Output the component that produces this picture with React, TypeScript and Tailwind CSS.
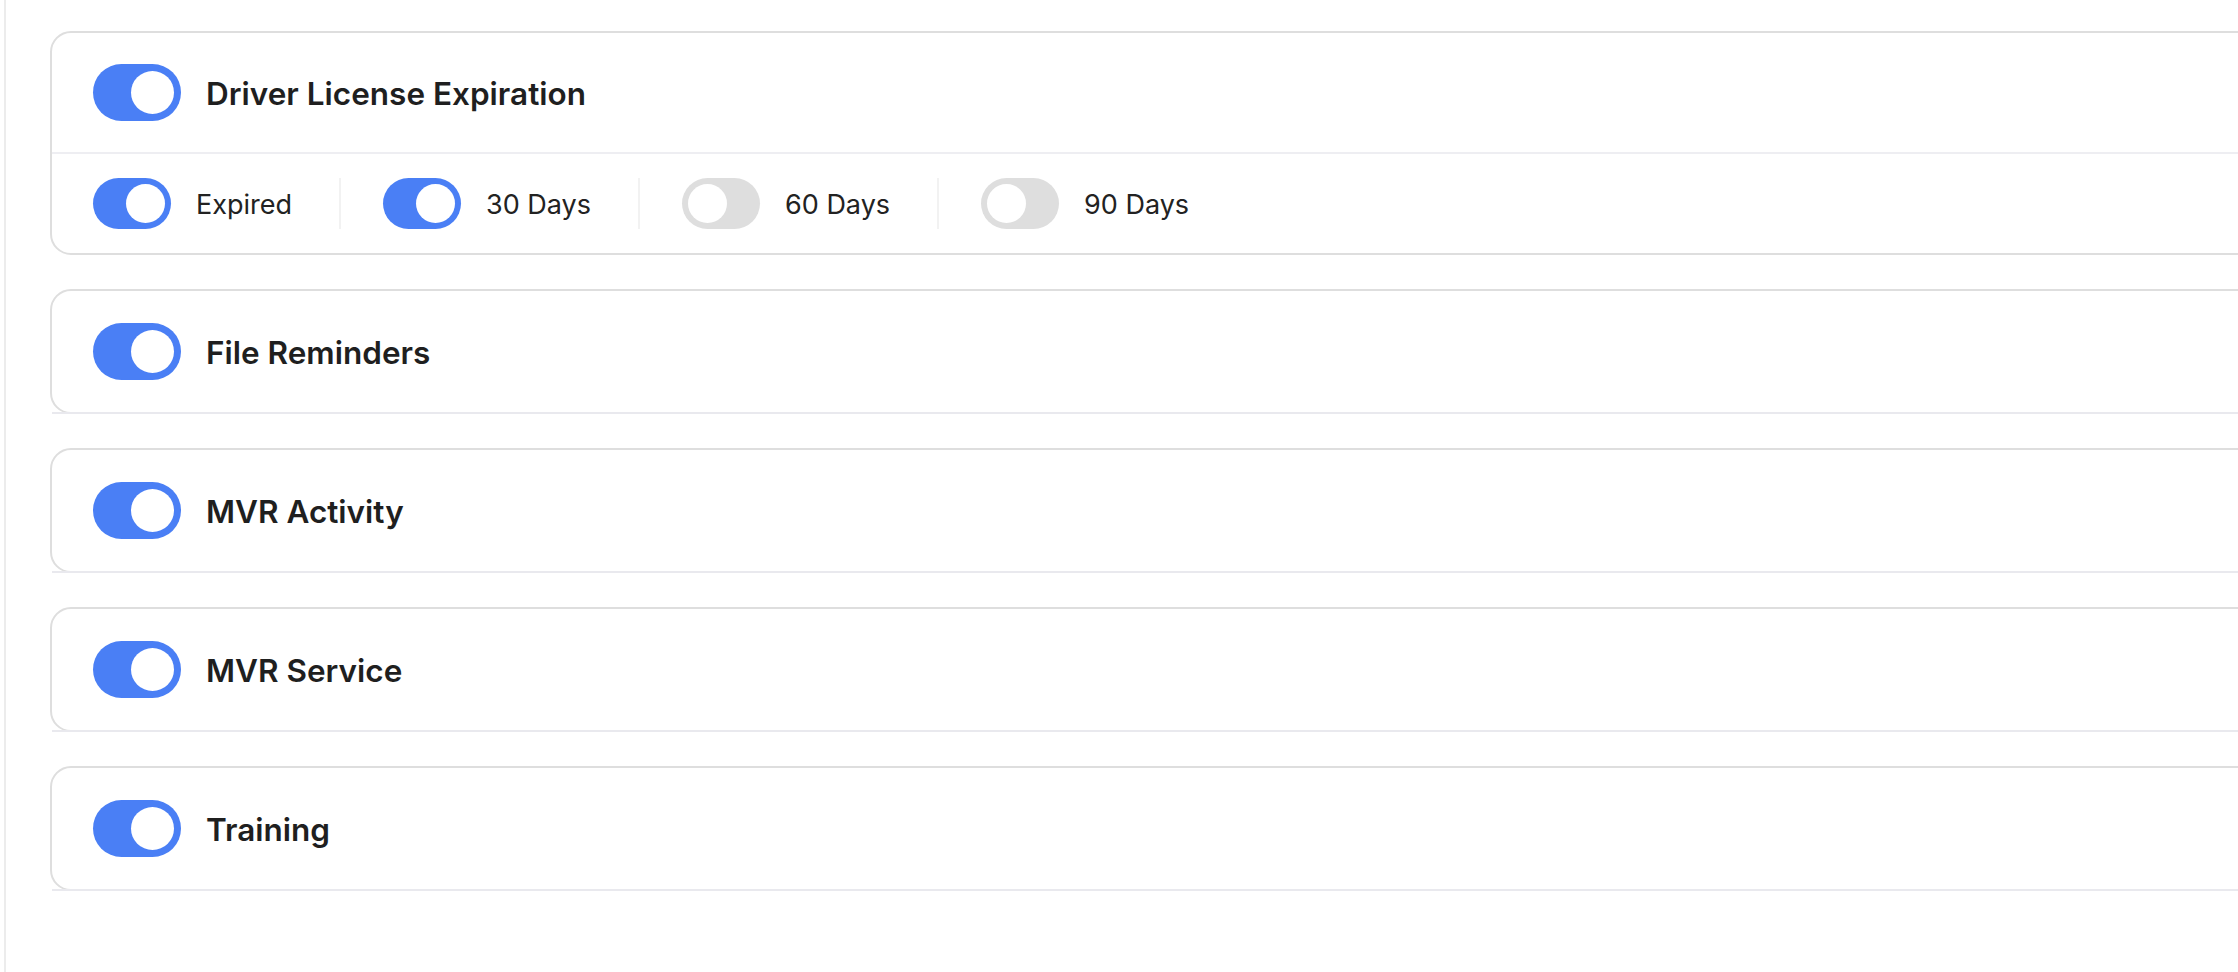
import React, { useState } from 'react';

type ToggleProps = {
  on: boolean;
  size?: 'lg' | 'sm';
  onChange?: () => void;
};

const Toggle: React.FC<ToggleProps> = ({ on, size = 'lg', onChange }) => {
  const lg = size === 'lg';
  return (
    <button
      type="button"
      onClick={onChange}
      className={`flex shrink-0 items-center rounded-full ${lg ? 'h-[57px] w-[88px] px-[7px]' : 'h-[51px] w-[78px] px-[6px]'} ${on ? 'justify-end bg-[#4a7ff5]' : 'justify-start bg-[#dedede]'}`}
    >
      <span className={`block rounded-full bg-white ${lg ? 'h-[43px] w-[43px]' : 'h-[39px] w-[39px]'}`} />
    </button>
  );
};

const windows = [
  { label: 'Expired', on: true },
  { label: '30 Days', on: true },
  { label: '60 Days', on: false },
  { label: '90 Days', on: false },
];

const sections = ['File Reminders', 'MVR Activity', 'MVR Service', 'Training'];

export default function App() {
  const [expiry, setExpiry] = useState(windows.map((w) => w.on));

  return (
    <div className="h-[972px] w-[2238px] overflow-hidden bg-white pl-[4px]" style={{ fontFamily: 'Inter, "Noto Sans", sans-serif' }}>
      <div className="h-full border-l-2 border-[#ececec] pl-[44px] pt-[31px]">
        <div className="flex w-[2400px] flex-col gap-[34px]">
          {/* Driver license card, expanded */}
          <section className="rounded-[21px] border-2 border-[#dedede] bg-white">
            <div className="flex h-[121px] items-center gap-[25px] border-b-2 border-[#eeeef2] px-[41px]">
              <Toggle on />
              <h3 className="pt-[3px] text-[31.5px] font-semibold text-[#1f1f1f]">Driver License Expiration</h3>
            </div>
            <div className="flex h-[99px] items-center px-[41px]">
              {windows.map((w, i) => (
                <div
                  key={w.label}
                  className={`flex items-center gap-[25px] pr-[47px] ${i > 0 ? 'border-l-2 border-[#f2f2f2] pl-[42px]' : ''}`}
                >
                  <Toggle
                    size="sm"
                    on={expiry[i]}
                    onChange={() => setExpiry(expiry.map((v, j) => (j === i ? !v : v)))}
                  />
                  <span className="pt-[3px] text-[27px] text-[#222222]">{w.label}</span>
                </div>
              ))}
            </div>
          </section>

          {/* Collapsed notification groups */}
          {sections.map((name) => (
            <section key={name} className="rounded-[21px] border-2 border-[#dedede] bg-white">
              <div className="-mb-[2px] flex h-[123px] items-center gap-[25px] border-b-2 border-[#e9e9ee] px-[41px]">
                <Toggle on />
                <h3 className="pt-[3px] text-[31.5px] font-semibold text-[#1f1f1f]">{name}</h3>
              </div>
            </section>
          ))}
        </div>
      </div>
    </div>
  );
}
